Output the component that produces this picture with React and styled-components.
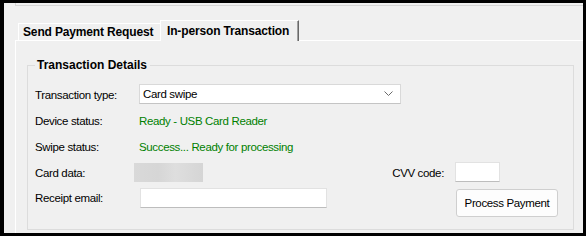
import React from "react";
import styled, { createGlobalStyle } from "styled-components";

const Global = createGlobalStyle`
  html, body { margin: 0; padding: 0; background: #000; }
  * { box-sizing: border-box; }
  body { font-family: "Liberation Sans", Arial, sans-serif; font-size: 12px; color: #000; }
`;

const Frame = styled.div`
  width: 586px;
  height: 236px;
  border-style: solid;
  border-color: #000;
  border-width: 3px 3px 3px 4px;
  background: #f0f0f0;
  overflow: hidden;
  display: flex;
  flex-direction: column;
`;

const TopStub = styled.div`
  margin-left: 11px;
  height: 3px;
  border-left: 1px solid #d6d6d6;
  border-bottom: 1px solid #d6d6d6;
  flex: none;
`;

const TabArea = styled.div`
  margin-left: 11px;
  flex: 1;
  display: flex;
  flex-direction: column;
`;

const TabBar = styled.div`
  height: 34px;
  display: flex;
  align-items: flex-end;
  padding-left: 3px;
  flex: none;
`;

const Tab = styled.div`
  font-weight: bold;
  letter-spacing: -0.15px;
  display: flex;
  align-items: center;
  white-space: nowrap;
  background: #f0f0f0;
  border-top: 1px solid #fff;
  border-left: 1px solid #fff;
  ${(p) =>
    p.$active
      ? `
    position: relative;
    z-index: 1;
    width: 139px;
    height: 21px;
    margin-bottom: -1px;
    padding-left: 6px;
    padding-bottom: 1px;
    border-right: 1px solid #696969;
    box-shadow: inset -1px 0 0 #a0a0a0;
  `
      : `
    width: 142px;
    height: 17px;
    padding-left: 4px;
  `}
`;

const Panel = styled.div`
  flex: 1;
  border-top: 1px solid #fff;
  border-left: 1px solid #fff;
  padding-left: 11px;
  padding-top: 17px;
`;

const Group = styled.fieldset`
  margin: 0;
  width: 547px;
  border: 1px solid #dcdcdc;
  padding: 11px 15px 12px 7px;
  min-width: 0;
`;

const Legend = styled.legend`
  font-weight: bold;
  letter-spacing: 0px;
  line-height: 15px;
  padding: 0 3px 0 2px;
`;

const Form = styled.div`
  display: grid;
  grid-template-columns: 104px 1fr auto 103px;
  grid-template-rows: 20px 20px 20px 20px auto;
  row-gap: 6px;
  align-items: center;
  font-size: 11.5px;
  letter-spacing: -0.35px;
`;

const Label = styled.div`
  grid-column: ${(p) => p.$col || 1};
  padding-right: ${(p) => (p.$col ? "11px" : "0")};
  align-self: ${(p) => (p.$top ? "start" : "center")};
  padding-top: ${(p) => (p.$top ? "4px" : "1px")};
  white-space: nowrap;
`;

const Status = styled.div`
  grid-column: 2 / 5;
  color: #008000;
  padding-top: 1px;
`;

const Select = styled.div`
  grid-column: 2 / 5;
  width: 262px;
  height: 20px;
  background: #fff;
  border: 1px solid #d9d9d9;
  border-bottom-color: #c4c4c4;
  display: flex;
  align-items: center;
  justify-content: space-between;
  padding: 0 7px 0 3px;
`;

const Redacted = styled.div`
  width: 69px;
  height: 19px;
  margin-left: -5px;
  margin-top: 1px;
  background: linear-gradient(90deg, #d9d9d9 0%, #d6d6d6 35%, #dedede 60%, #d5d5d5 100%);
`;

const TextBox = styled.div`
  width: ${(p) => p.$w}px;
  height: 20px;
  margin-left: ${(p) => p.$ml || 0}px;
  align-self: start;
  background: #fff;
  border: 1px solid #e2e2e2;
  border-bottom-color: #bdbdbd;
`;

const Button = styled.button`
  grid-column: 4;
  align-self: start;
  margin: 1px 0 0 1px;
  width: 102px;
  height: 28px;
  background: #fdfdfd;
  border: 1px solid #cfcfcf;
  border-radius: 3px;
  font-family: "Liberation Sans", Arial, sans-serif;
  font-size: 11.5px;
  letter-spacing: -0.35px;
  color: #000;
  padding: 0;
`;

const Chevron = () => (
  <svg width="9" height="6" viewBox="0 0 9 6">
    <polyline points="0.5,0.5 4.5,4.5 8.5,0.5" fill="none" stroke="#6a6a6a" strokeWidth="1" />
  </svg>
);

export default function App() {
  return (
    <>
      <Global />
      <Frame>
        <TopStub />
        <TabArea>
          <TabBar>
            <Tab>Send Payment Request</Tab>
            <Tab $active>In-person Transaction</Tab>
          </TabBar>
          <Panel>
            <Group>
              <Legend>Transaction Details</Legend>
              <Form>
                <Label>Transaction type:</Label>
                <Select>
                  <span>Card swipe</span>
                  <Chevron />
                </Select>

                <Label>Device status:</Label>
                <Status>Ready - USB Card Reader</Status>

                <Label>Swipe status:</Label>
                <Status>Success... Ready for processing</Status>

                <Label>Card data:</Label>
                <Redacted />
                <Label $col={3}>CVV code:</Label>
                <TextBox $w={45} />

                <Label $top>Receipt email:</Label>
                <TextBox $w={187} $ml={1} />
                <Button>Process Payment</Button>
              </Form>
            </Group>
          </Panel>
        </TabArea>
      </Frame>
    </>
  );
}
